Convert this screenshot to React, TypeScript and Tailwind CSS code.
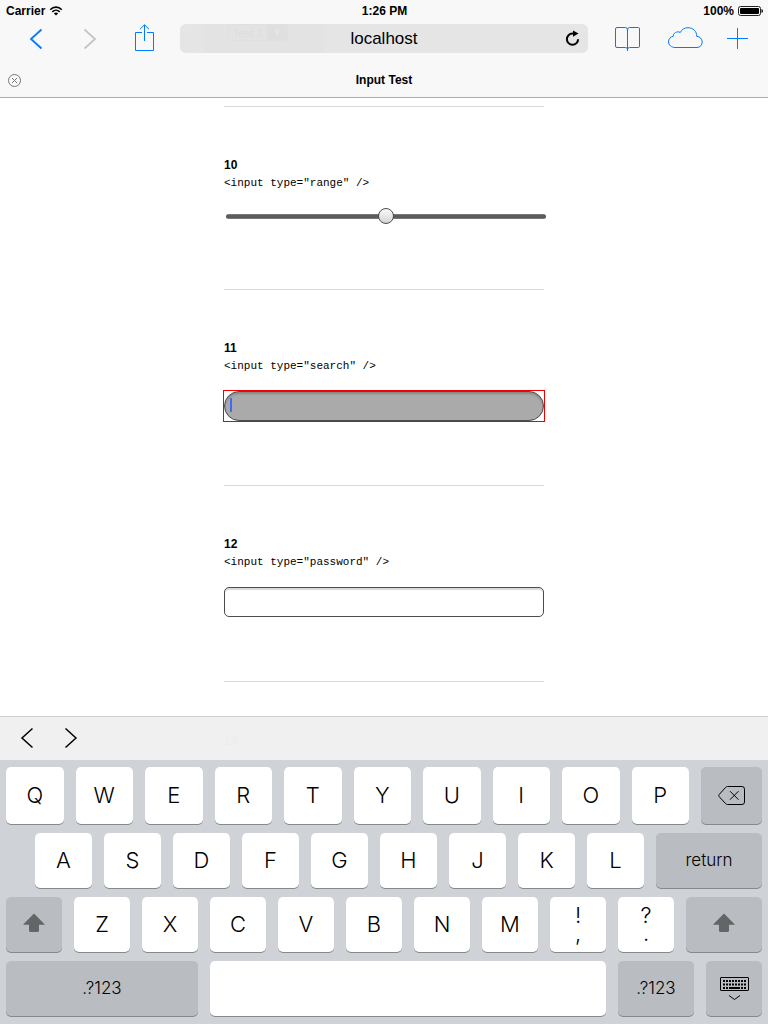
import React from "react";

type KeyProps = {
  label: string;
  children: React.ReactNode;
  className?: string;
};

const keyBase =
  "flex items-center justify-center rounded-[5px] shadow-[0_1px_0_#85888c] font-[Inter,sans-serif] font-light text-black";

function LetterKey({ label, children }: KeyProps) {
  return (
    <button type="button" aria-label={label} className={`${keyBase} min-w-0 flex-1 flex-col bg-white pb-0.5 text-[22px] leading-[18px]`}>
      {children}
    </button>
  );
}

function ActionKey({ label, children, className = "" }: KeyProps) {
  return (
    <button type="button" aria-label={label} className={`${keyBase} shrink-0 bg-[#b9bdc1] text-[17px] ${className}`}>
      {children}
    </button>
  );
}

function Letters({ letters }: { letters: string }) {
  return (
    <>
      {letters.split("").map((c) => (
        <LetterKey key={c} label={c}>
          {c}
        </LetterKey>
      ))}
    </>
  );
}

function ShiftIcon() {
  return (
    <svg width="24" height="20" viewBox="0 0 24 20" fill="#636567" aria-hidden="true">
      <path d="M12 0.500 22.600 11.200Q23 11.800 22.200 11.800H17V17.500Q17 19 15.500 19H8.500Q7 19 7 17.500V11.800H1.800Q1 11.800 1.400 11.200Z" />
    </svg>
  );
}

function Chevron({ dir, width }: { dir: "left" | "right"; width: number }) {
  return (
    <svg width="14" height="22" viewBox="0 0 14 22" fill="none" stroke="currentColor" strokeWidth={width} aria-hidden="true">
      <path d={dir === "left" ? "M12.500 1.500 2 11 12.500 20.500" : "M1.500 1.500 12 11 1.500 20.500"} />
    </svg>
  );
}

function StatusBar() {
  return (
    <div className="grid h-5 grid-cols-3 items-center pt-0.5 pl-1.5 pr-[5px] text-xs font-bold">
      <div className="flex items-center gap-1">
        <span>Carrier</span>
        <svg width="14" height="10" viewBox="0 0 13 10" fill="none" stroke="#000" aria-label="Wi-Fi">
          <path d="M0.700 3.700C4 0.300 9 0.300 12.300 3.700" strokeWidth="1.600" />
          <path d="M2.800 5.900C4.900 3.800 8.100 3.800 10.200 5.900" strokeWidth="1.500" />
          <path d="M6.500 9.500 4.400 7.400C5.600 6.300 7.400 6.300 8.600 7.400Z" fill="#000" stroke="none" />
        </svg>
      </div>
      <span className="text-center">1:26 PM</span>
      <div className="flex items-center justify-end gap-1">
        <span>100%</span>
        <svg width="25" height="10" viewBox="0 0 25 10" aria-label="Battery full">
          <rect x="0.500" y="0.500" width="22" height="9" rx="2" fill="none" stroke="#222" />
          <rect x="2" y="2" width="19" height="6" rx="1" />
          <path d="M23.500 3Q25 3.500 25 5T23.500 7Z" />
        </svg>
      </div>
    </div>
  );
}

function Toolbar() {
  return (
    <div className="flex h-10 items-center px-[18px] pb-[3px] text-[#007aff]">
      <div className="mr-[18px] flex items-center gap-[18px]">
        <button type="button" aria-label="Back" className="flex w-9 justify-center">
          <Chevron dir="left" width={1.8} />
        </button>
        <button type="button" aria-label="Forward" disabled className="flex w-9 justify-center text-[#c4c4c4]">
          <Chevron dir="right" width={1.8} />
        </button>
        <button type="button" aria-label="Share" className="flex w-9 justify-end pr-2 pb-0.5">
          <svg width="19" height="28" viewBox="0 0 19 28" fill="none" stroke="currentColor" aria-hidden="true">
            <path d="M7 8.500H0.500V26.500H18.500V8.500H12M9.500 17V1M5 5.200 9.500 0.800 14 5.200" />
          </svg>
        </button>
      </div>
      <div className="relative flex h-[29px] min-w-0 flex-1 items-center justify-center rounded-md bg-[#e5e5e5] text-[17px] text-black">
        <div aria-hidden="true" className="absolute left-6 top-0 flex h-full w-30 items-start bg-[#e3e3e4] pl-6 text-xs text-[#dddddd]">
          <span className="flex h-[17px] w-15 justify-between overflow-hidden rounded-sm border border-[#e0e0e1] pl-1 text-[11px] leading-4">
            Test 1<span className="w-5 bg-[#dfdfdf] text-center text-[10px] text-[#e5e5e5]">▼</span>
          </span>
        </div>
        <button type="button" className="relative w-full">localhost</button>
        <button type="button" aria-label="Reload" className="absolute right-2">
          <svg width="15" height="17" viewBox="0 0 15 17" fill="none" stroke="#000" strokeWidth="2" aria-hidden="true">
            <path d="M9 3.600H7.500A5.600 5.600 0 1 0 13.100 9.200" />
            <path d="M8 0.500 13.500 3.500 8 6.800Z" fill="#000" stroke="none" />
          </svg>
        </button>
      </div>
      <div className="ml-[22px] flex items-center gap-[22px]">
        <button type="button" aria-label="Bookmarks" className="flex w-9 justify-center">
          <svg width="26" height="24" viewBox="0 0 26 24" fill="none" stroke="currentColor" aria-hidden="true">
            <path d="M12.500 24V3Q12.500 0.500 10.500 0.500H2Q0.500 0.500 0.500 2V19Q0.500 20.500 2 20.500H10.500Q12.500 20.500 12.500 22.500Q12.500 20.500 14.500 20.500H23.500Q24.500 20.500 24.500 19V2Q24.500 0.500 23.500 0.500H14.500Q12.500 0.500 12.500 3" />
          </svg>
        </button>
        <button type="button" aria-label="iCloud tabs" className="flex w-9 justify-center pb-0.5">
          <svg width="36" height="22" viewBox="0 0 36 22" fill="none" stroke="currentColor" aria-hidden="true">
            <path d="M7 20.500C3.500 20.500 0.500 18 0.500 14.800C0.500 12 2.500 9.700 5.300 9.300C5 6.200 9 3.600 12.300 5.500C13.500 2.500 16.500 0.700 20 0.700C25 0.700 29 4.500 28.700 9.300C32 9.500 34.200 12 34.200 15C34.200 18 32 20.500 29 20.500Z" />
          </svg>
        </button>
        <button type="button" aria-label="New tab" className="flex w-6 justify-center">
          <svg width="22" height="22" viewBox="0 0 22 22" fill="none" stroke="currentColor" aria-hidden="true">
            <path d="M10.500 0V21M0 10.500H21" />
          </svg>
        </button>
      </div>
    </div>
  );
}

function Field({ id, type, children }: { id: string; type: string; children: React.ReactNode }) {
  return (
    <section className="border-b border-[#d9d9d9] pt-[49px] pb-16">
      <label htmlFor={id} className="block">
        <span className="block text-xs leading-[18px] font-bold">{id}</span>
        <code className="mb-4 block font-['Liberation_Mono',monospace] text-[11px] leading-[18px]">
          {`<input type="${type}" />`}
        </code>
      </label>
      {children}
    </section>
  );
}

export default function App() {
  return (
    <div className="flex min-h-screen flex-col bg-white font-['Liberation_Sans',Arial,sans-serif] text-black">
      <header className="border-b border-[#adadad] bg-[#f8f8f8]">
        <StatusBar />
        <Toolbar />
        <div className="relative flex h-[37px] items-center justify-center pt-[3px] text-xs font-bold">
          <button type="button" aria-label="Close tab" className="absolute left-2">
            <svg width="13" height="13" viewBox="0 0 13 13" fill="none" stroke="#777" aria-hidden="true">
              <circle cx="6.500" cy="6.500" r="6" />
              <path d="M4 4 9 9M9 4 4 9" />
            </svg>
          </button>
          <h1>Input Test</h1>
        </div>
      </header>

      <main className="mx-auto w-full max-w-80 flex-1 pt-2">
        <div className="border-t border-[#d9d9d9]" />
        <Field id="10" type="range">
          <input
            id="10"
            type="range"
            defaultValue={50}
            className="ml-0.5 block h-[17px] w-full appearance-none bg-transparent [&::-webkit-slider-runnable-track]:h-[5px] [&::-webkit-slider-runnable-track]:rounded-full [&::-webkit-slider-runnable-track]:bg-[linear-gradient(#858585,#5c5c5c_30%,#5c5c5c_70%,#858585)] [&::-webkit-slider-thumb]:-mt-[6px] [&::-webkit-slider-thumb]:size-4 [&::-webkit-slider-thumb]:appearance-none [&::-webkit-slider-thumb]:rounded-full [&::-webkit-slider-thumb]:border [&::-webkit-slider-thumb]:border-[#4c4c4c] [&::-webkit-slider-thumb]:bg-[linear-gradient(#fafafa,#d4d4d4)]"
          />
        </Field>
        <Field id="11" type="search">
          <div className="relative outline-1 outline-[#f00000]">
            <input
              id="11"
              type="search"
              className="block h-[30px] w-full appearance-none rounded-full border border-[#4c4c4c] bg-[#aaaaaa] px-2 caret-transparent shadow-[inset_0_2px_2px_rgba(0,0,0,0.2)] outline-none"
            />
            <span aria-hidden="true" className="absolute top-[7px] left-1.5 h-3.5 w-0.5 bg-[#426bf2]" />
          </div>
        </Field>
        <Field id="12" type="password">
          <input
            id="12"
            type="password"
            className="block h-[30px] w-full appearance-none rounded-[5px] border border-[#4c4c4c] bg-white px-2 shadow-[inset_0_2px_1px_rgba(0,0,0,0.15)]"
          />
        </Field>
      </main>

      <div>
        <div className="relative flex h-11 items-center gap-[30px] border-t border-[#d0d0d0] bg-[#f0f0f0] pb-0.5 pl-5">
          <div aria-hidden="true" className="absolute inset-x-0 top-4 mx-auto max-w-80 text-xs leading-4 font-bold text-[#ededed]">
            13
          </div>
          <button type="button" aria-label="Previous field">
            <Chevron dir="left" width={1.5} />
          </button>
          <button type="button" aria-label="Next field">
            <Chevron dir="right" width={1.5} />
          </button>
        </div>
        <div className="flex flex-col gap-[9px] bg-[#cfd2d6] px-1.5 pt-[7px] pb-2">
          <div className="flex h-[57px] gap-3">
            <Letters letters="QWERTYUIOP" />
            <ActionKey label="Delete" className="w-[61px]">
              <svg width="28" height="20" viewBox="0 0 28 20" fill="none" stroke="#000" aria-hidden="true">
                <path d="M9.500 0.500H24Q26.500 0.500 26.500 3.200V16Q26.500 18.500 24 18.500H9.500Q8.500 18.500 7.700 17.700L1.200 10.700Q0.400 9.600 1.200 8.500L7.700 1.300Q8.500 0.500 9.500 0.500ZM12 5.200 20.500 13.700M20.500 5.200 12 13.700" />
              </svg>
            </ActionKey>
          </div>
          <div className="flex h-[55px] gap-3 pl-[29px]">
            <Letters letters="ASDFGHJKL" />
            <ActionKey label="return" className="w-[106px]">
              return
            </ActionKey>
          </div>
          <div className="flex h-[55px] gap-3">
            <ActionKey label="Left shift" className="w-14 pb-1">
              <ShiftIcon />
            </ActionKey>
            <Letters letters="ZXCVBNM" />
            <LetterKey label="Comma or exclamation mark">
              <span>!</span>
              <span>,</span>
            </LetterKey>
            <LetterKey label="Period or question mark">
              <span>?</span>
              <span>.</span>
            </LetterKey>
            <ActionKey label="Right shift" className="w-19 pb-1">
              <ShiftIcon />
            </ActionKey>
          </div>
          <div className="flex h-[55px] gap-3">
            <ActionKey label="Numbers, left" className="w-48">
              .?123
            </ActionKey>
            <LetterKey label="Space">{""}</LetterKey>
            <ActionKey label="Numbers, right" className="w-19">
              .?123
            </ActionKey>
            <ActionKey label="Hide keyboard" className="w-14">
              <svg width="29" height="24" viewBox="0 0 29 24" fill="none" stroke="#000" aria-hidden="true">
                <rect x="0.500" y="0.500" width="28" height="13" rx="0.500" />
                <path d="M3 4H26M3 7.500H26" strokeWidth="2" strokeDasharray="2 1" />
                <path d="M3 11H5M6 11H8M9 11H20M21 11H23M24 11H26" strokeWidth="2" />
                <path d="M9 18.500 14.500 22.500 20 18.500" />
              </svg>
            </ActionKey>
          </div>
        </div>
      </div>
    </div>
  );
}
